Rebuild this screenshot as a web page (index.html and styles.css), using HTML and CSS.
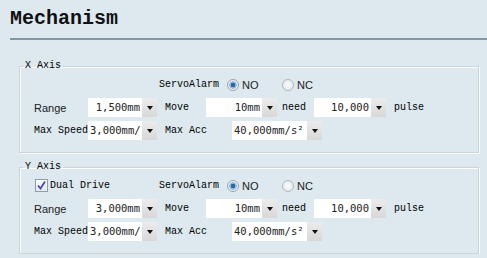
FILE: index.html
```html
<!DOCTYPE html>
<html lang="en">
<head>
  <meta charset="UTF-8">
  <title>Mechanism</title>
  <link rel="stylesheet" href="styles.css">
</head>
<body>
  <h1 class="title">Mechanism</h1>

  <fieldset class="axis">
    <legend>X Axis</legend>
    <div class="row">
      <span class="lead"></span>
      <span class="lbl servo">ServoAlarm</span>
      <span class="opt"><span class="radio on"></span>NO</span>
      <span class="opt"><span class="radio"></span>NC</span>
    </div>
    <div class="row">
      <span class="lbl sans first">Range</span>
      <span class="sel w69 right"><span class="val">1,500mm</span><span class="arrow"></span></span>
      <span class="lbl move">Move</span>
      <span class="sel w71 right"><span class="val">10mm</span><span class="arrow"></span></span>
      <span class="lbl need">need</span>
      <span class="sel w72 right"><span class="val">10,000</span><span class="arrow"></span></span>
      <span class="lbl pulse">pulse</span>
    </div>
    <div class="row">
      <span class="lbl first">Max Speed</span>
      <span class="sel w69"><span class="val">3,000mm/</span><span class="arrow"></span></span>
      <span class="lbl acc">Max Acc</span>
      <span class="sel w90"><span class="val">40,000mm/s²</span><span class="arrow"></span></span>
    </div>
  </fieldset>

  <fieldset class="axis second">
    <legend>Y Axis</legend>
    <div class="row">
      <span class="lead"><span class="check"><svg width="11" height="11" viewBox="0 0 11 11"><path d="M2 5.5 L4.5 8.5 L9 1.5" fill="none" stroke="#4b46b4" stroke-width="1.8"/></svg></span><span class="lbl">Dual Drive</span></span>
      <span class="lbl servo">ServoAlarm</span>
      <span class="opt"><span class="radio on"></span>NO</span>
      <span class="opt"><span class="radio"></span>NC</span>
    </div>
    <div class="row">
      <span class="lbl sans first">Range</span>
      <span class="sel w69 right"><span class="val">3,000mm</span><span class="arrow"></span></span>
      <span class="lbl move">Move</span>
      <span class="sel w71 right"><span class="val">10mm</span><span class="arrow"></span></span>
      <span class="lbl need">need</span>
      <span class="sel w72 right"><span class="val">10,000</span><span class="arrow"></span></span>
      <span class="lbl pulse">pulse</span>
    </div>
    <div class="row">
      <span class="lbl first">Max Speed</span>
      <span class="sel w69"><span class="val">3,000mm/</span><span class="arrow"></span></span>
      <span class="lbl acc">Max Acc</span>
      <span class="sel w90"><span class="val">40,000mm/s²</span><span class="arrow"></span></span>
    </div>
  </fieldset>
</body>
</html>
```

FILE: styles.css
```css
body { margin: 0; background: #dde9ee; font-family: "Liberation Mono", monospace; color: #000; }

.title { margin: 0 0 0 10px; padding: 7px 0 7px 0; font-size: 20px; line-height: 24px; font-weight: bold; color: #111; border-bottom: 2px solid #8197a0; }

.axis { margin: 20px 8px 0 19px; padding: 1px 10px 10px 3px; border: 1px solid #c9d5da; box-shadow: inset 1px 1px 0 #fff, 1px 1px 0 #fff; }
.axis.second { margin-top: 8px; }
.axis legend { padding: 0 2px; font-size: 10px; line-height: 12px; }

.row { display: flex; align-items: center; height: 23px; padding-left: 11px; }
.lbl { font-size: 10px; white-space: nowrap; }
.sans { font-family: "Liberation Sans", sans-serif; font-size: 11px; color: #222; }
.first { width: 54px; flex: none; }
.lead { width: 125px; flex: none; display: flex; align-items: center; }
.servo { width: 68px; }
.move { width: 41px; margin-left: 8px; }
.need { width: 32px; margin-left: 5px; }
.pulse { margin-left: 8px; }
.acc { width: 67px; margin-left: 8px; }

.opt { width: 55px; display: flex; align-items: center; font-family: "Liberation Sans", sans-serif; font-size: 11px; color: #222; }
.radio { width: 10px; height: 10px; margin-right: 3px; border: 1px solid #b0b8be; border-radius: 50%; background: radial-gradient(circle, #fbfcfd, #dfe4e8); }
.radio.on { border-color: #97a3ac; background: radial-gradient(circle, #2a66a8 0 2px, #8fb8dc 2.5px 3.5px, #eef2f5 4px); }

.check { width: 11px; height: 11px; margin: 0 2px 0 1px; border: 1px solid #8a9fae; background: linear-gradient(#fdfdfd, #e3e8ec); display: flex; }

.sel { display: flex; height: 19px; flex: none; background: #fff; }
.sel .val { flex: 1; overflow: hidden; white-space: nowrap; padding: 0 2px; font-family: "DejaVu Sans Mono", monospace; font-size: 10.5px; line-height: 19px; color: #222; }
.sel.right .val { text-align: right; }
.sel .arrow { width: 15px; flex: none; background: linear-gradient(#ececec, #d8d8d8); display: flex; align-items: center; justify-content: center; }
.sel .arrow::after { content: ""; border-left: 3.5px solid transparent; border-right: 3.5px solid transparent; border-top: 4px solid #111; }
.w69 { width: 69px; }
.w71 { width: 71px; }
.w72 { width: 72px; }
.w90 { width: 90px; }
```
